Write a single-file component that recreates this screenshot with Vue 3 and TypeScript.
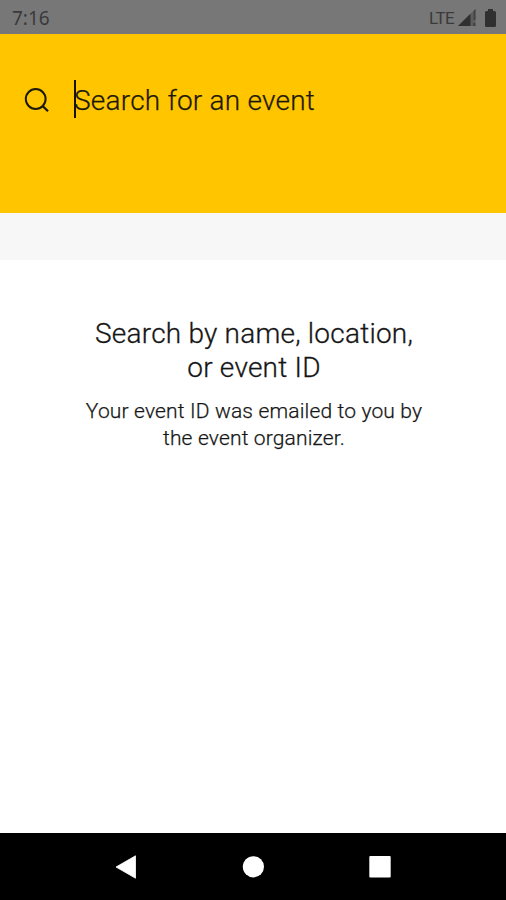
<script setup lang="ts">
import { ref } from 'vue'

const clock = ref<string>('7:16')
const placeholder = 'Search for an event'
const titleLines: string[] = ['Search by name, location,', 'or event ID']
const hintLines: string[] = ['Your event ID was emailed to you by', 'the event organizer.']
</script>

<template>
  <div class="screen">
    <div class="status">
      <span class="clock">{{ clock }}</span>
      <span class="network">LTE</span>
      <svg class="signal" width="18" height="17" viewBox="0 0 18 17">
        <path d="M0 17 L17.500 0 V17 Z" fill="#5e5e5e" />
        <path d="M0 17 L12.500 4.800 V17 Z" fill="#303030" />
        <path d="M15.500 2 L17.500 0 V11 H15.500 Z M15 14h2.500v3H15z" fill="#444" />
      </svg>
      <svg class="battery" width="11" height="18" viewBox="0 0 11 18">
        <path d="M3 0h5v2h1.500q1.500 0 1.500 1.500v13q0 1.500-1.500 1.500h-8q-1.500 0-1.500-1.500v-13Q0 2 1.500 2H3z" fill="#303030" />
      </svg>
    </div>
    <header class="header">
      <svg class="search-icon" width="26" height="26" viewBox="0 0 26 26" fill="none" stroke="#1c1908" stroke-width="2">
        <circle cx="11.700" cy="11" r="9.900" />
        <path d="M18.600 18 L24 23.300" stroke-width="2.300" />
      </svg>
      <div class="field">
        <span class="caret"></span>
        <span class="placeholder">{{ placeholder }}</span>
      </div>
    </header>
    <div class="strip"></div>
    <main class="content">
      <h1 class="title">
        <span v-for="line in titleLines" :key="line" class="line">{{ line }}</span>
      </h1>
      <p class="hint">
        <span v-for="line in hintLines" :key="line" class="line">{{ line }}</span>
      </p>
    </main>
    <nav class="navbar">
      <svg width="22" height="24" viewBox="0 0 22 24"><path d="M1 12 L20.500 .8 V23.200 Z" fill="#fff" stroke="#fff" stroke-linejoin="round" stroke-width=".8" /></svg>
      <svg width="22" height="22" viewBox="0 0 22 22"><circle cx="11.400" cy="10.800" r="10.600" fill="#fff" /></svg>
      <svg width="22" height="22" viewBox="0 0 22 22"><rect x=".3" y=".1" width="21.400" height="21.400" rx="1" fill="#fff" /></svg>
    </nav>
  </div>
</template>

<style>
body {
  margin: 0;
}
</style>

<style scoped>
.screen {
  width: 506px;
  height: 900px;
  display: flex;
  flex-direction: column;
  overflow: hidden;
  background: #fff;
  color: #161616;
  font-family: Roboto, sans-serif;
}
.status {
  height: 34px;
  flex: none;
  box-sizing: border-box;
  display: flex;
  align-items: center;
  padding: 1px 10px 0 12px;
  background: #777;
  color: #3a3a3a;
}
.clock {
  margin-right: auto;
  font-family: "Noto Sans", sans-serif;
  font-size: 19px;
  line-height: 32px;
}
.network {
  font-size: 17px;
  letter-spacing: -0.6px;
  margin-right: 4px;
}
.battery {
  margin-left: 9px;
}
.header {
  height: 179px;
  flex: none;
  box-sizing: border-box;
  display: flex;
  align-items: flex-start;
  padding: 46px 0 0 24px;
  background: #ffc600;
}
.search-icon {
  margin-top: 8px;
}
.field {
  display: flex;
  margin-left: 24px;
  height: 38px;
}
.caret {
  width: 2px;
  height: 38px;
  background: #15120a;
}
.placeholder {
  margin-left: -2px;
  font-size: 28px;
  font-weight: 300;
  line-height: 42px;
  letter-spacing: 0.22px;
  -webkit-text-stroke: 0.25px currentColor;
  color: #1c1908;
  white-space: nowrap;
}
.strip {
  height: 47px;
  flex: none;
  background: #f7f7f7;
}
.content {
  flex: 1;
  padding: 57px 0 0 2px;
  text-align: center;
}
.line {
  display: block;
  white-space: nowrap;
}
.title {
  margin: 0;
  font-size: 28px;
  font-weight: 300;
  line-height: 34px;
  letter-spacing: 0.22px;
  -webkit-text-stroke: 0.3px currentColor;
}
.hint {
  margin: 13px 0 0;
  font-size: 21px;
  font-weight: 300;
  line-height: 27px;
  letter-spacing: 0.16px;
  -webkit-text-stroke: 0.25px currentColor;
}
.navbar {
  height: 67px;
  flex: none;
  box-sizing: border-box;
  display: flex;
  align-items: center;
  justify-content: space-between;
  padding: 0 115px;
  background: #000;
}
</style>
